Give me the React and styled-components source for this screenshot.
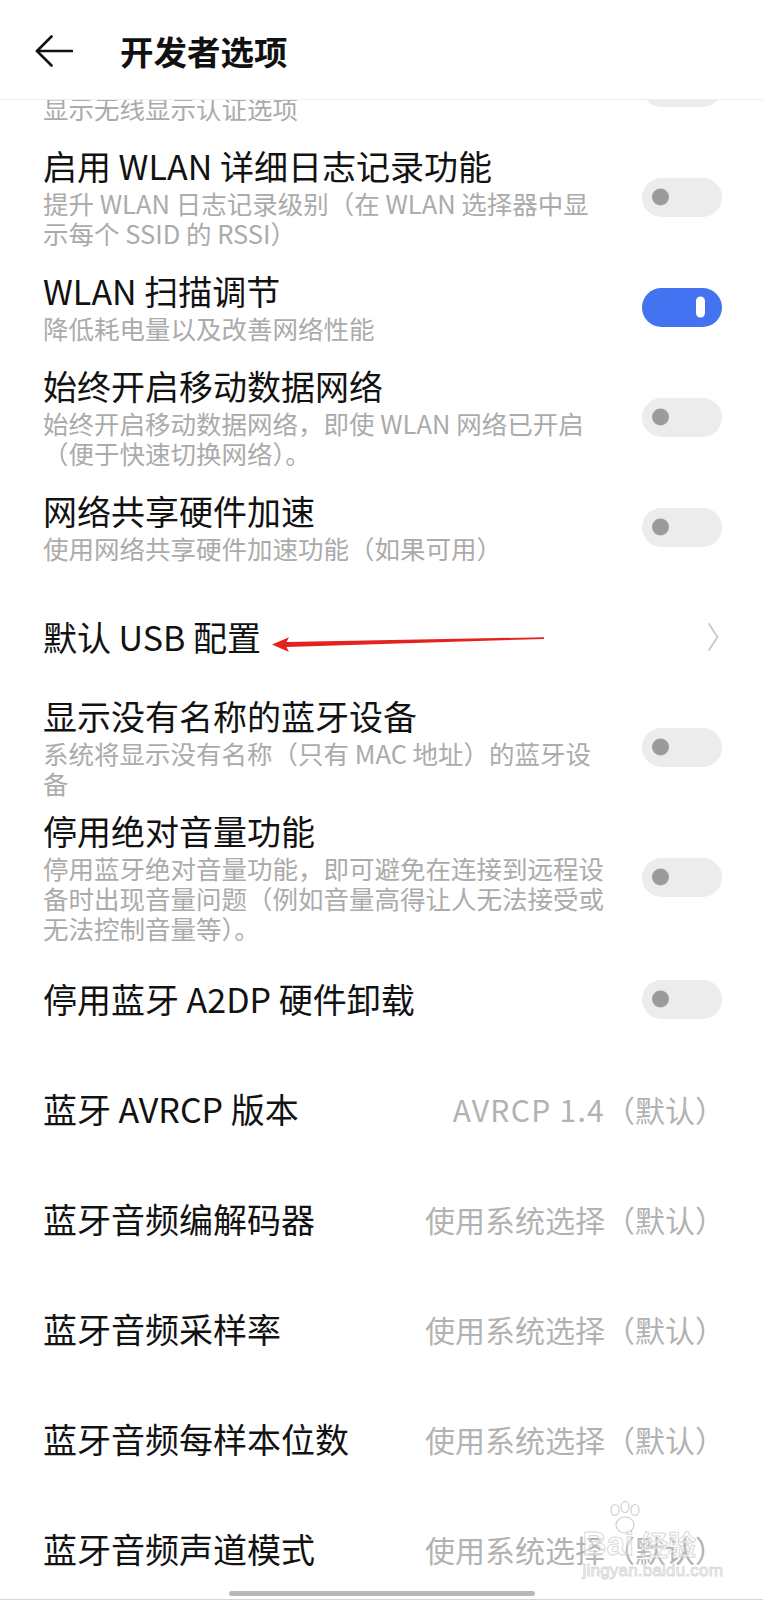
import React from 'react';
import styled, { createGlobalStyle } from 'styled-components';

const Global = createGlobalStyle`
  html, body { margin: 0; padding: 0; background: #fff; }
  body {
    width: 763px;
    height: 1600px;
    overflow: hidden;
    font-family: "Noto Sans CJK SC", "Noto Sans", sans-serif;
    -webkit-font-smoothing: antialiased;
  }
`;

const Screen = styled.div`
  position: relative;
  width: 763px;
  height: 1600px;
  overflow: hidden;
  background: #fff;
  display: flex;
  flex-direction: column;
  border-bottom: 1px solid #d6d6d6;
  box-sizing: border-box;
`;

const Header = styled.header`
  flex: none;
  height: 100px;
  box-sizing: border-box;
  padding: 2px 0 0 35px;
  display: flex;
  align-items: center;
  border-bottom: 1px solid #efefef;
  background: #fff;
`;

const BackButton = styled.button`
  border: 0;
  background: none;
  padding: 0;
  width: 38px;
  height: 32px;
  display: flex;
  align-items: center;
  color: #111;
`;

const Title = styled.h1`
  margin: 0 0 0 47px;
  font-size: 33.5px;
  line-height: 44px;
  font-weight: 700;
  color: #111;
`;

const Viewport = styled.main`
  flex: 1;
  overflow: hidden;
`;

const List = styled.div`
  margin-top: -68px;
  display: flex;
  flex-direction: column;
`;

const Row = styled.div`
  position: relative;
  display: flex;
  align-items: center;
  min-height: 110px;
  box-sizing: border-box;
  padding: ${p => (p.$tall ? '9px' : '0')} 41px ${p => (p.$tall ? '1px' : '0')} 43px;
`;

const TextCol = styled.div`
  flex: 1;
  min-width: 0;
  display: flex;
  flex-direction: column;
`;

const ItemTitle = styled.div`
  font-size: 34px;
  line-height: 40px;
  color: #121212;
  white-space: nowrap;
`;

const Summary = styled.div`
  margin-top: 2px;
  font-size: 25.5px;
  line-height: 30px;
  color: #ababab;
`;

const Line = styled.span`
  display: block;
  white-space: nowrap;
`;

const Track = styled.div`
  flex: none;
  position: relative;
  width: 80px;
  height: 39px;
  border-radius: 20px;
  background: ${p => (p.$on ? '#4373f1' : '#ececec')};
  margin-left: 16px;
`;

const Knob = styled.span`
  position: absolute;
  top: 50%;
  transform: translateY(-50%);
  left: ${p => (p.$on ? '54px' : '10px')};
  width: ${p => (p.$on ? '9px' : '17px')};
  height: ${p => (p.$on ? '21px' : '17px')};
  border-radius: 9px;
  background: ${p => (p.$on ? '#ffffff' : '#9b9b9b')};
`;

const Value = styled.div`
  flex: none;
  margin-right: -3px;
  font-size: 30px;
  line-height: 40px;
  color: #b2b2b2;
  white-space: nowrap;
`;

const Latin = styled.span`
  letter-spacing: 1.3px;
`;

const Chevron = styled.svg`
  flex: none;
  margin-right: 2px;
`;

const Annotation = styled.svg`
  position: absolute;
  left: 268px;
  top: 44px;
  pointer-events: none;
`;

const HomeBar = styled.div`
  position: absolute;
  left: 229px;
  bottom: 3px;
  width: 306px;
  height: 5px;
  border-radius: 3px;
  background: #b9b9b9;
`;

const Watermark = styled.div`
  position: absolute;
  right: 40px;
  bottom: 18px;
  display: flex;
  flex-direction: column;
  align-items: flex-start;
  pointer-events: none;
  color: rgba(255, 255, 255, 0.55);
  -webkit-text-stroke: 1px rgba(195, 195, 195, 0.65);
  font-family: "Liberation Sans", "Noto Sans CJK SC", sans-serif;
`;

const WmTop = styled.div`
  position: relative;
  display: flex;
  align-items: flex-end;
  font-size: 33px;
  line-height: 34px;
  font-weight: 700;
`;

const WmCjk = styled.span`
  margin-left: 6px;
  font-family: "Noto Sans CJK SC", sans-serif;
  font-size: 28px;
`;

const WmPaw = styled.svg`
  position: absolute;
  left: 22px;
  top: -26px;
`;

const WmUrl = styled.div`
  font-size: 17px;
  line-height: 20px;
  letter-spacing: 0.2px;
`;

function Toggle({ on }) {
  return (
    <Track $on={on}>
      <Knob $on={on} />
    </Track>
  );
}

const switchRows = [
  { title: '无线显示认证', lines: ['显示无线显示认证选项'], on: false },
  { title: '启用 WLAN 详细日志记录功能', lines: ['提升 WLAN 日志记录级别（在 WLAN 选择器中显', '示每个 SSID 的 RSSI）'], on: false },
  { title: 'WLAN 扫描调节', lines: ['降低耗电量以及改善网络性能'], on: true },
  { title: '始终开启移动数据网络', lines: ['始终开启移动数据网络，即使 WLAN 网络已开启', '（便于快速切换网络）。'], on: false },
  { title: '网络共享硬件加速', lines: ['使用网络共享硬件加速功能（如果可用）'], on: false },
];

const switchRows2 = [
  { title: '显示没有名称的蓝牙设备', lines: ['系统将显示没有名称（只有 MAC 地址）的蓝牙设', '备'], on: false },
  { title: '停用绝对音量功能', lines: ['停用蓝牙绝对音量功能，即可避免在连接到远程设', '备时出现音量问题（例如音量高得让人无法接受或', '无法控制音量等）。'], on: false },
  { title: '停用蓝牙 A2DP 硬件卸载', lines: [], on: false },
];

const valueRows = [
  { title: '蓝牙 AVRCP 版本', latin: 'AVRCP 1.4', value: '（默认）' },
  { title: '蓝牙音频编解码器', value: '使用系统选择（默认）' },
  { title: '蓝牙音频采样率', value: '使用系统选择（默认）' },
  { title: '蓝牙音频每样本位数', value: '使用系统选择（默认）' },
  { title: '蓝牙音频声道模式', value: '使用系统选择（默认）' },
];

function SwitchRow({ title, lines, on }) {
  return (
    <Row $tall={lines.length > 2}>
      <TextCol>
        <ItemTitle>{title}</ItemTitle>
        {lines.length > 0 && (
          <Summary>
            {lines.map((l, i) => (
              <Line key={i}>{l}</Line>
            ))}
          </Summary>
        )}
      </TextCol>
      <Toggle on={on} />
    </Row>
  );
}

export default function App() {
  return (
    <>
      <Global />
      <Screen>
        <Header>
          <BackButton aria-label="返回">
            <svg width="38" height="32" viewBox="0 0 38 32" fill="none">
              <path d="M37 16 H2" stroke="#111" strokeWidth="2.6" strokeLinecap="round" />
              <path d="M16.5 1.5 L2 16 L16.5 30.5" stroke="#111" strokeWidth="2.6" strokeLinecap="round" strokeLinejoin="round" />
            </svg>
          </BackButton>
          <Title>开发者选项</Title>
        </Header>
        <Viewport>
          <List>
            {switchRows.map((r, i) => (
              <SwitchRow key={i} {...r} />
            ))}
            <Row>
              <TextCol>
                <ItemTitle>默认 USB 配置</ItemTitle>
              </TextCol>
              <Chevron width="14" height="30" viewBox="0 0 14 30" fill="none">
                <path d="M3 2 L11.5 15 L3 28" stroke="#c9c9c9" strokeWidth="1.8" strokeLinecap="round" strokeLinejoin="round" />
              </Chevron>
              <Annotation width="280" height="30" viewBox="0 0 280 30">
                <path d="M4 18.6 L21 11.2 L18.5 16.1 L276 11.2 L276 12.9 L18.5 21 L21 26 Z" fill="#e4231f" />
              </Annotation>
            </Row>
            {switchRows2.map((r, i) => (
              <SwitchRow key={i} {...r} />
            ))}
            {valueRows.map((r, i) => (
              <Row key={i}>
                <TextCol>
                  <ItemTitle>{r.title}</ItemTitle>
                </TextCol>
                <Value>
                  {r.latin && <Latin>{r.latin}</Latin>}
                  {r.value}
                </Value>
              </Row>
            ))}
          </List>
        </Viewport>
        <Watermark>
          <WmTop>
            <WmPaw width="40" height="36" viewBox="0 0 40 36">
              <g fill="rgba(255,255,255,0.5)" stroke="rgba(185,185,185,0.7)" strokeWidth="1.2">
                <ellipse cx="10" cy="9" rx="4" ry="5.5" />
                <ellipse cx="20" cy="6" rx="4" ry="5.5" />
                <ellipse cx="30" cy="9" rx="4" ry="5.5" />
                <ellipse cx="20" cy="24" rx="9" ry="8" />
              </g>
            </WmPaw>
            <span>Bai</span>
            <WmCjk>经验</WmCjk>
          </WmTop>
          <WmUrl>jingyan.baidu.com</WmUrl>
        </Watermark>
        <HomeBar />
      </Screen>
    </>
  );
}
